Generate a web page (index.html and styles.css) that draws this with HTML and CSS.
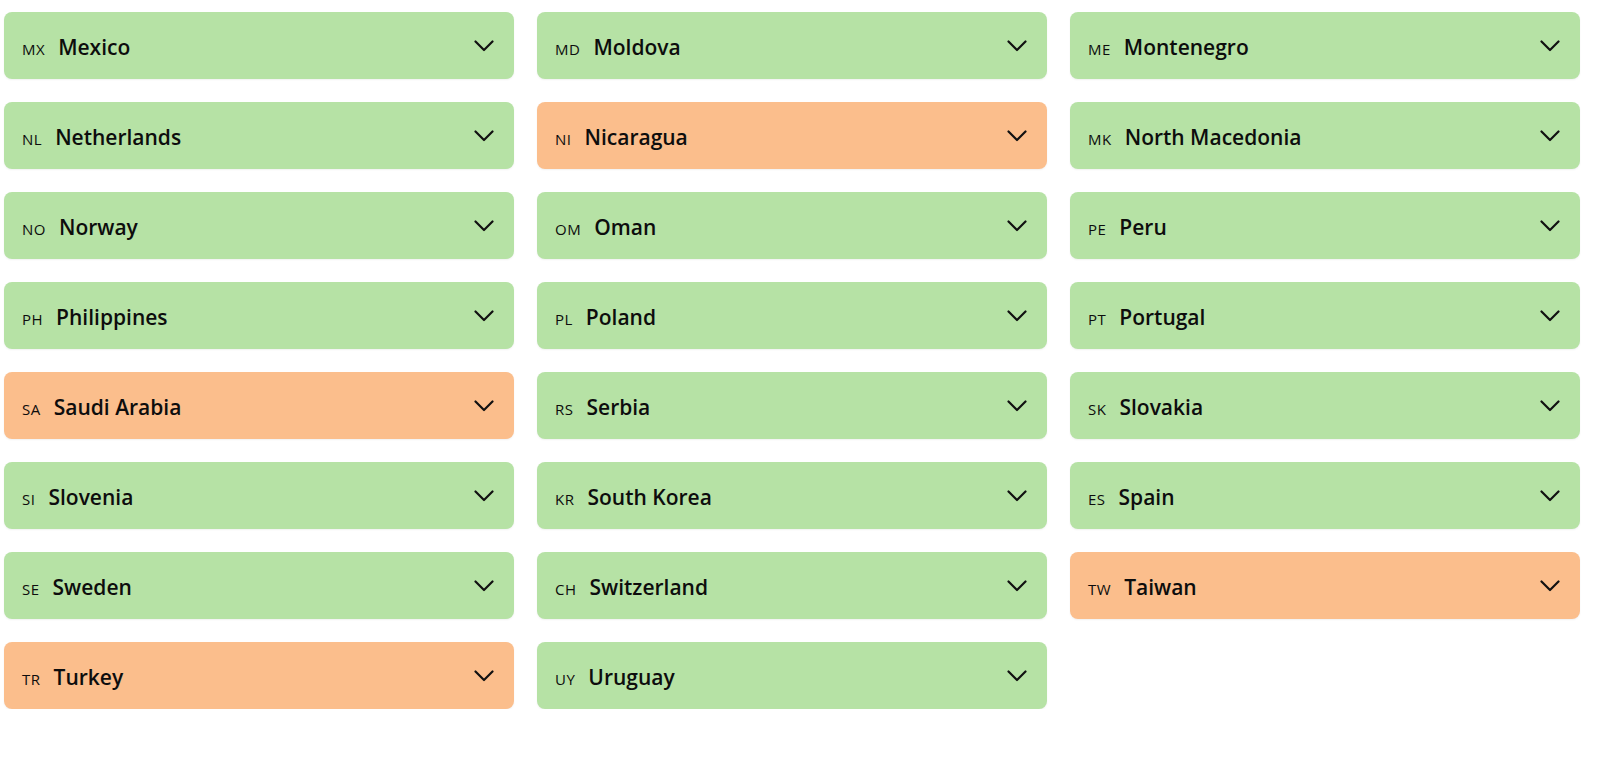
FILE: index.html
```html
<!DOCTYPE html>
<html lang="en">
<head>
    <meta charset="UTF-8">
    <meta name="viewport" content="width=device-width, initial-scale=1.0">
    <title>Countries</title>
    <link rel="stylesheet" href="styles.css">
</head>
<body>
    <div class="country-grid" id="grid"></div>

    <script>
        const countries = [
            ['MX', 'Mexico', 'ok'], ['MD', 'Moldova', 'ok'], ['ME', 'Montenegro', 'ok'],
            ['NL', 'Netherlands', 'ok'], ['NI', 'Nicaragua', 'warn'], ['MK', 'North Macedonia', 'ok'],
            ['NO', 'Norway', 'ok'], ['OM', 'Oman', 'ok'], ['PE', 'Peru', 'ok'],
            ['PH', 'Philippines', 'ok'], ['PL', 'Poland', 'ok'], ['PT', 'Portugal', 'ok'],
            ['SA', 'Saudi Arabia', 'warn'], ['RS', 'Serbia', 'ok'], ['SK', 'Slovakia', 'ok'],
            ['SI', 'Slovenia', 'ok'], ['KR', 'South Korea', 'ok'], ['ES', 'Spain', 'ok'],
            ['SE', 'Sweden', 'ok'], ['CH', 'Switzerland', 'ok'], ['TW', 'Taiwan', 'warn'],
            ['TR', 'Turkey', 'warn'], ['UY', 'Uruguay', 'ok']
        ];

        const grid = document.getElementById('grid');
        const chevron = '<svg class="chevron" width="20" height="12" viewBox="0 0 20 12"><path d="M1.5 1.5 L10 10 L18.5 1.5" fill="none" stroke="#111" stroke-width="2.2" stroke-linecap="round" stroke-linejoin="round"/></svg>';

        countries.forEach(function (c) {
            let card = document.createElement('div');
            card.className = 'country ' + c[2];
            card.innerHTML = '<span class="label"><span class="code">' + c[0] + '</span>' +
                '<span class="name">' + c[1] + '</span></span>' + chevron;
            grid.appendChild(card);
        });
    </script>
</body>
</html>
```

FILE: styles.css
```css
body {
    margin: 0;
    font-family: "Open Sans", "Noto Sans", sans-serif;
    background-color: #fff;
    color: #0d0d0d;
}
.country-grid {
    display: grid;
    grid-template-columns: repeat(3, 510px);
    column-gap: 23px;
    row-gap: 23px;
    padding: 12px 0 0 4px;
}
.country {
    height: 67px;
    display: flex;
    align-items: center;
    justify-content: space-between;
    padding: 0 20px 0 18px;
    border-radius: 8px;
    box-shadow: 0 1px 2px rgba(0, 0, 0, 0.06);
}
.country.ok {
    background-color: #b6e2a5;
}
.country.warn {
    background-color: #fbbe8c;
}
.country .label {
    display: flex;
    align-items: baseline;
    padding-top: 2px;
}
.country .code {
    font-size: 15px;
    letter-spacing: 0.5px;
    margin-right: 13px;
}
.country .name {
    font-size: 21px;
    font-weight: 600;
}
.country .chevron {
    display: block;
    margin-top: 1px;
}
```
